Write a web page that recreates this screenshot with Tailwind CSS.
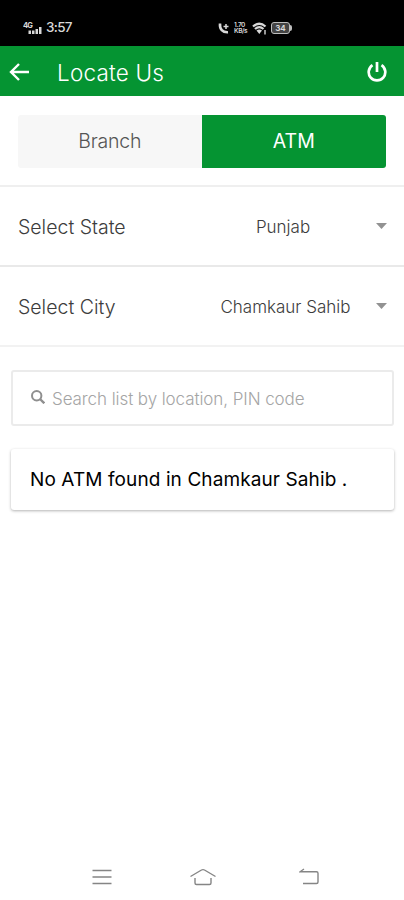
<!DOCTYPE html>
<html lang="en">

<head>
    <meta charset="UTF-8">
    <meta name="viewport" content="width=device-width, initial-scale=1.0">
    <title>Locate Us</title>
    <script src="https://cdn.jsdelivr.net/npm/@tailwindcss/browser@4"></script>
</head>

<body class="bg-white font-['Inter','Liberation_Sans',sans-serif] text-[#3c3c3c]">
    <div class="flex h-[900px] flex-col overflow-hidden">
        <!-- Status bar -->
        <div class="flex h-[46px] shrink-0 items-center bg-black pt-[10px] pl-[23px] text-[#d8d8d8]">
            <svg class="h-[14px] w-[20px]" viewBox="0 0 20 14" fill="currentColor">
                <text x="0" y="6.500" font-size="7.500" font-weight="700" textLength="10">4G</text>
                <path d="M5.500 9.500h2.500V13H5.500zM9 9.500h2.500V13H9zM12.500 8h2.500v5h-2.500zM16 6h2.500v7H16z" />
            </svg>
            <span class="ml-[3px] w-[27px] text-[13.500px] leading-none font-medium tracking-[-0.7px]">3:57</span>
            <div class="ml-[145px] flex items-center gap-[4px]">
                <svg class="h-[13px] w-[12px]" viewBox="0 0 12 13" fill="none" stroke="currentColor">
                    <path d="M2 1.500c-.5 5.500 2.500 9 8 8.700" stroke-width="2.600" />
                    <path d="M5.500 4.500h5M8 2v5" stroke-width="1.500" />
                </svg>
                <div class="h-[13px] w-[14px] text-[6.500px] leading-[6.500px] font-semibold tracking-[-0.4px]">
                    <p>1.70</p>
                    <p>KB/s</p>
                </div>
                <svg class="h-[13px] w-[15px]" viewBox="0 0 15 13" fill="none" stroke="currentColor">
                    <path d="M1 4.500c4-3.500 8.500-3.500 12.500 0M3 7c2.800-2.400 5.800-2.400 8.500 0" stroke-width="2.300" />
                    <path d="m4.500 8.500 2.800 3.500 2.700-3.500q-2.700-2-5.500 0Z" fill="currentColor" stroke="none" />
                    <path d="M13 8v4.500" stroke-width="1.400" />
                </svg>
                <div class="flex items-center">
                    <span class="flex h-[12px] w-[19px] items-center justify-center rounded-[3px] border-[1.500px] border-[#bdbdbd] bg-[#444] text-[8px] leading-none font-bold">34</span>
                    <span class="h-[6px] w-[2px] rounded-r bg-[#bdbdbd]"></span>
                </div>
            </div>
        </div>

        <!-- Title bar -->
        <header class="flex h-[50px] shrink-0 items-center bg-[#059432] pt-[2px] pr-[17px] pl-[9px] text-white">
            <svg class="h-[20px] w-[20px]" viewBox="0 0 20 20" fill="none" stroke="currentColor" stroke-width="2.400">
                <path d="M20 10H2M10 2l-8 8 8 8" />
            </svg>
            <h1 class="mt-[2px] ml-[28px] text-[22.500px] leading-none font-[350] whitespace-nowrap tracking-[0.2px]">Locate Us</h1>
            <svg class="ml-auto h-[20px] w-[20px]" viewBox="0 0 20 20" fill="none" stroke="currentColor" stroke-width="2.700">
                <path d="M5.500 3.200a8.300 8.300 0 1 0 9 0M10 0v10" />
            </svg>
        </header>

        <!-- Branch / ATM toggle -->
        <div class="flex h-[91px] shrink-0 border-b-2 border-[#efefef] px-[18px] pt-[19px] text-[19.500px]">
            <button class="h-[53px] w-[184px] rounded-l-[3px] bg-[#f7f7f7] font-[350] tracking-[-0.2px] text-[#555]">Branch</button>
            <button class="h-[53px] w-[185px] rounded-r-[3px] bg-[#059432] text-white">ATM</button>
        </div>

        <div class="flex h-[80px] shrink-0 items-center border-b-2 border-[#e9e9e9] pr-[17px] pl-[18px] font-[350]">
            <span class="mt-[3px] w-[190px] text-[19.500px]">Select State</span>
            <span class="mt-[3px] w-[150px] text-center text-[17px]">Punjab</span>
            <svg class="ml-auto h-[6px] w-[11px]" viewBox="0 0 11 6" fill="#929292">
                <path d="M0 0h11L5.500 6z" />
            </svg>
        </div>

        <div class="flex h-[80px] shrink-0 items-center border-b-2 border-[#f2f2f2] pr-[17px] pl-[18px] font-[350]">
            <span class="mt-[3px] w-[190px] text-[19.500px]">Select City</span>
            <span class="mt-[4px] w-[155px] text-center text-[17px] whitespace-nowrap">Chamkaur Sahib</span>
            <svg class="ml-auto h-[6px] w-[11px]" viewBox="0 0 11 6" fill="#929292">
                <path d="M0 0h11L5.500 6z" />
            </svg>
        </div>

        <!-- Search -->
        <div class="mr-[10px] ml-[11px] mt-[23px] flex h-[56px] shrink-0 items-center rounded-[3px] border-2 border-[#ebebeb] pl-[18px] text-[#a5a5a5]">
            <svg class="mb-[2px] h-[14px] w-[14px]" viewBox="0 0 14 14" fill="none" stroke="#8f8f8f" stroke-width="2">
                <circle cx="5.700" cy="5.700" r="4.700" />
                <path d="m9 9 4.300 4.300" stroke-width="2.400" />
            </svg>
            <span class="mt-[4px] ml-[7px] text-[17px] font-[350] whitespace-nowrap tracking-[-0.08px]">Search list by location, PIN code</span>
        </div>

        <div class="mr-[10px] ml-[11px] mt-[23px] flex h-[61px] shrink-0 items-center rounded-[3px] bg-white pt-[2px] pl-[19px] text-[19px] whitespace-nowrap tracking-[0.1px] text-black shadow-[0_1px_3px_rgba(0,0,0,0.3)]">
            No ATM found in Chamkaur Sahib .
        </div>

        <!-- System navigation -->
        <nav class="mt-auto flex h-[46px] shrink-0 items-center pl-[92px] text-[#858585]">
            <svg class="h-[18px] w-[20px]" viewBox="0 0 20 18" fill="none" stroke="currentColor" stroke-width="1.400">
                <path d="M.5 2.500h19M.5 9h19M.5 15.500h19" />
            </svg>
            <svg class="ml-[78px] h-[18px] w-[26px]" viewBox="0 0 26 18" fill="none" stroke="currentColor" stroke-width="1.400" stroke-linejoin="round">
                <path d="M.5 8.500 11.500 2q1.500-.8 3 0l11 6.500M5 10v5q0 1.500 1.500 1.500h13q1.500 0 1.500-1.500v-5" />
            </svg>
            <svg class="ml-[83px] h-[18px] w-[20px]" viewBox="0 0 20 18" fill="none" stroke="currentColor" stroke-width="1.400">
                <path d="M5 1 1 3.800h16.500q1.500 0 1.500 1.500v8.700q0 1.500-1.500 1.500H4" />
            </svg>
        </nav>
    </div>
</body>

</html>
